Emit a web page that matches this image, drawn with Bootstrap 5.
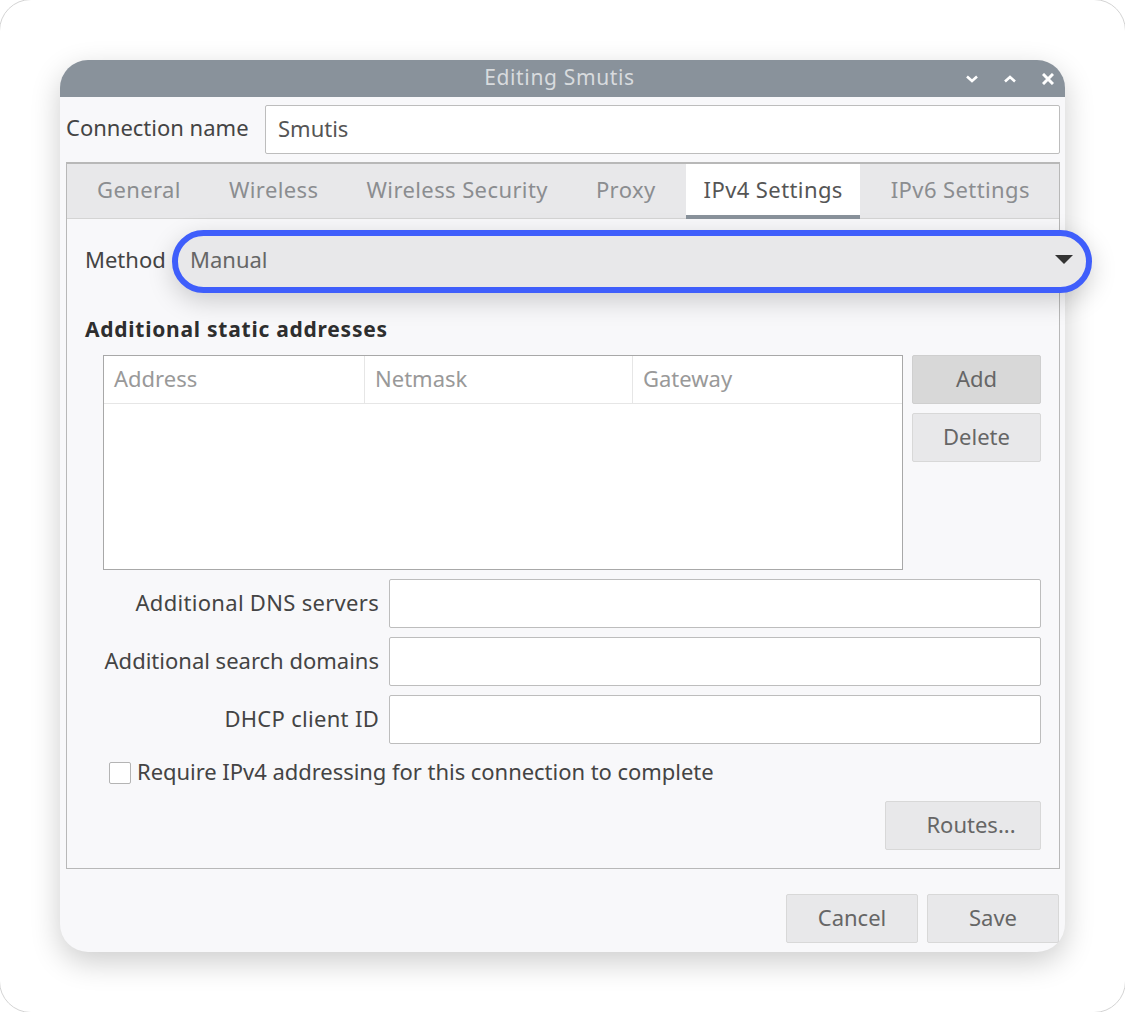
<!DOCTYPE html>
<html lang="en">
<head>
  <meta charset="UTF-8">
  <meta name="viewport" content="width=device-width, initial-scale=1.0">
  <title>Editing Smutis</title>
  <link href="https://cdn.jsdelivr.net/npm/bootstrap@5.3.3/dist/css/bootstrap.min.css" rel="stylesheet">
  <style>
    body { background: #fff; font-family: "Noto Sans", "Liberation Sans", sans-serif; font-size: 22px; color: #444; overflow: hidden; }
    .page-frame { width: 1127px; height: 1014px; margin: -1px; padding: 60px 60px 0; border-radius: 32px; border: 1px solid #d4d4d4; }
    .dlg { width: 1005px; height: 892px; background: #f8f8fa; border-radius: 28px; box-shadow: 0 10px 30px rgba(0,0,0,.2); }
    .dlg-title { height: 37px; background: #89929b; color: #d8dbde; border-radius: 28px 28px 0 0; font-size: 21px; letter-spacing: .65px; padding: 0 6px 2px 0; }
    .win-btns { right: 11px; top: 0; bottom: 0; gap: 26px; }
    .name-row { height: 49px; margin: 8px 5px 0 6px; }
    .name-row label { width: 199px; flex-shrink: 0; white-space: nowrap; }
    .txt { height: 49px; border: 1px solid #bdbdbd; border-radius: 2px; background: #fff; color: #555; font-size: 22px; padding: 0 12px 3px; box-shadow: none; }
    .book { margin: 8px 5px 0 6px; height: 707px; border: 1px solid #b8b8b8; border-top-width: 2px; }
    .tabbar { height: 55px; background: #e8e8ea; border-bottom: 1px solid #d4d4d4; padding-left: 6px; }
    .tabbar a { color: #8b8d90; text-decoration: none; height: 54px; line-height: 50px; padding: 0 17.5px; margin: 0 6.5px; letter-spacing: .4px; white-space: nowrap; }
    .tabbar a.on { background: #fff; color: #555; border-bottom: 4px solid #89929b; height: 55px; }
    .book-body { padding: 0 18px; }
    .method-row { height: 63px; margin-top: 11px; }
    .method-row label { width: 87px; color: #444; flex-shrink: 0; }
    .combo { width: 920px; height: 63px; border: 6px solid #3f5efb; border-radius: 32px; background: #e8e8ea; color: #666; padding: 0 13px 4px 12px; box-shadow: 0 8px 26px rgba(0,0,0,.18); }
    .combo-arrow { width: 0; height: 0; border-left: 9px solid transparent; border-right: 9px solid transparent; border-top: 9px solid #333; }
    .sec-head { font-weight: 700; color: #2e2e2e; font-size: 21px; letter-spacing: .75px; margin-top: 21px; height: 30px; line-height: 30px; }
    .addr-wrap { margin: 11px 0 0 18px; gap: 9px; }
    .addr-table { width: 800px; height: 215px; background: #fff; border: 1px solid #a8a8a8; }
    .addr-head { height: 48px; border-bottom: 1px solid #e6e6e6; color: #999; }
    .addr-head div { padding-left: 10px; line-height: 44px; border-right: 1px solid #e6e6e6; }
    .addr-head div:last-child { border-right: 0; }
    .w-a { width: 261px; } .w-b { width: 268px; } .w-c { width: 269px; }
    .gbtn { width: 129px; height: 49px; padding: 0 0 2px; background: #e8e8ea; border: 1px solid #d8d8d8; border-radius: 2px; color: #666; font-size: 22px; }
    .gbtn.hot { background: #d8d8d8; border-color: #cfcfcf; }
    .side-btns { gap: 9px; }
    .field-row { height: 49px; margin: 9px 0 0 18px; gap: 10px; }
    .field-row label { width: 276px; text-align: right; white-space: nowrap; color: #444; padding-bottom: 3px; }
    .lbl-wide { letter-spacing: .3px; }
    .field-row .txt { width: 652px; }
    .chk-row { margin: 17px 0 0 24px; height: 24px; gap: 6px; color: #444; }
    .chk-box { width: 22px; height: 22px; background: #fff; border: 1px solid #b4b4b4; border-radius: 2px; }
    .chk-lbl { padding-bottom: 4px; white-space: nowrap; letter-spacing: -.04px; }
    .routes { width: 156px; margin: 16px 0 0 auto; display: block; padding-left: 16px; }
    .foot { margin: 25px 6px 0 0; gap: 9px; }
    .foot .gbtn { width: 132px; }
  </style>
</head>
<body class="m-0">
<div class="page-frame">
  <div class="dlg position-relative">
    <div class="dlg-title d-flex align-items-center justify-content-center position-relative">
      Editing Smutis
      <div class="win-btns position-absolute d-flex align-items-center">
        <svg width="12" height="8" viewBox="0 0 12 8"><path d="M1 1.5l5 4.5 5-4.5" fill="none" stroke="#fff" stroke-width="2.6"/></svg>
        <svg width="12" height="8" viewBox="0 0 12 8"><path d="M1 6.5l5-4.5 5 4.5" fill="none" stroke="#fff" stroke-width="2.6"/></svg>
        <svg width="12" height="12" viewBox="0 0 12 12"><path d="M1 1l10 10M11 1L1 11" fill="none" stroke="#fff" stroke-width="3"/></svg>
      </div>
    </div>

    <div class="name-row d-flex align-items-center">
      <label class="pb-1">Connection name</label>
      <input class="form-control txt flex-grow-1" value="Smutis">
    </div>

    <div class="book">
      <div class="tabbar d-flex">
        <a href="#">General</a>
        <a href="#">Wireless</a>
        <a href="#">Wireless Security</a>
        <a href="#">Proxy</a>
        <a href="#" class="on">IPv4 Settings</a>
        <a href="#">IPv6 Settings</a>
      </div>
      <div class="book-body">
        <div class="method-row d-flex align-items-center">
          <label class="pb-1">Method</label>
          <div class="combo d-flex align-items-center justify-content-between flex-shrink-0">
            <span>Manual</span><span class="combo-arrow"></span>
          </div>
        </div>
        <div class="sec-head">Additional static addresses</div>
        <div class="addr-wrap d-flex">
          <div class="addr-table">
            <div class="addr-head d-flex">
              <div class="w-a">Address</div><div class="w-b">Netmask</div><div class="w-c">Gateway</div>
            </div>
          </div>
          <div class="side-btns d-flex flex-column">
            <button class="btn gbtn hot">Add</button>
            <button class="btn gbtn">Delete</button>
          </div>
        </div>
        <div class="field-row d-flex align-items-center">
          <label class="lbl-wide">Additional DNS servers</label><input class="form-control txt">
        </div>
        <div class="field-row d-flex align-items-center">
          <label>Additional search domains</label><input class="form-control txt">
        </div>
        <div class="field-row d-flex align-items-center">
          <label class="lbl-wide">DHCP client ID</label><input class="form-control txt">
        </div>
        <div class="chk-row d-flex align-items-center">
          <span class="chk-box"></span>
          <span class="chk-lbl">Require IPv4 addressing for this connection to complete</span>
        </div>
        <button class="btn gbtn routes">Routes...</button>
      </div>
    </div>

    <div class="foot d-flex justify-content-end">
      <button class="btn gbtn">Cancel</button>
      <button class="btn gbtn">Save</button>
    </div>
  </div>
</div>
<script src="https://cdn.jsdelivr.net/npm/bootstrap@5.3.3/dist/js/bootstrap.bundle.min.js"></script>
</body>
</html>
